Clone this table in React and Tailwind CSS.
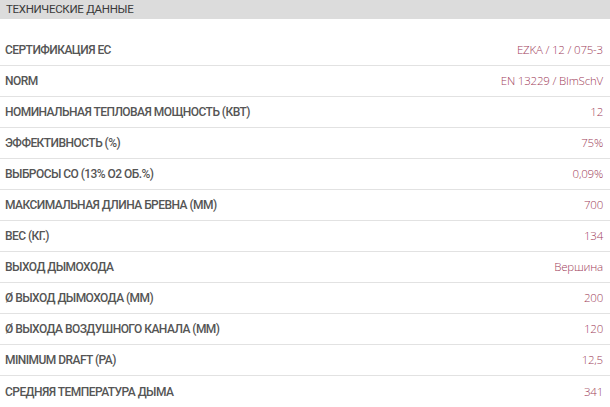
import React from 'react';

const specs = [
  ['СЕРТИФИКАЦИЯ ЕС', 'EZKA / 12 / 075-3'],
  ['NORM', 'EN 13229 / BImSchV'],
  ['НОМИНАЛЬНАЯ ТЕПЛОВАЯ МОЩНОСТЬ (КВТ)', '12'],
  ['ЭФФЕКТИВНОСТЬ (%)', '75%'],
  ['ВЫБРОСЫ CO (13% O2 ОБ.%)', '0,09%'],
  ['МАКСИМАЛЬНАЯ ДЛИНА БРЕВНА (ММ)', '700'],
  ['ВЕС (КГ.)', '134'],
  ['ВЫХОД ДЫМОХОДА', 'Вершина'],
  ['Ø ВЫХОД ДЫМОХОДА (ММ)', '200'],
  ['Ø ВЫХОДА ВОЗДУШНОГО КАНАЛА (ММ)', '120'],
  ['MINIMUM DRAFT (PA)', '12,5'],
  ['СРЕДНЯЯ ТЕМПЕРАТУРА ДЫМА', '341'],
];

const App = () => {
  return (
    <div className="min-h-screen bg-white font-['Open_Sans',sans-serif]">
      {/* header */}
      <div className="h-[19px] bg-[#dcdcdc] pl-[6px] font-['Roboto',sans-serif] text-[11.5px] leading-[19px] tracking-[-0.3px] text-[#3a3a3a]">
        ТЕХНИЧЕСКИЕ ДАННЫЕ
      </div>

      <div className="pt-[16px]">
        {specs.map(([label, value], i) => (
          <div
            key={label}
            className={
              'flex h-[31px] items-center justify-between pl-[5px] pr-[7px] ' +
              (i < specs.length - 1 ? 'border-b border-[#e2e2e2]' : '')
            }
          >
            <span className="font-['Roboto',sans-serif] text-[12px] font-medium tracking-[-0.55px] text-[#555555]">
              {label}
            </span>
            <span className="text-[11.5px] font-light tracking-[-0.2px] text-[#a0405a]">
              {value}
            </span>
          </div>
        ))}
      </div>
    </div>
  );
};

export default App;
